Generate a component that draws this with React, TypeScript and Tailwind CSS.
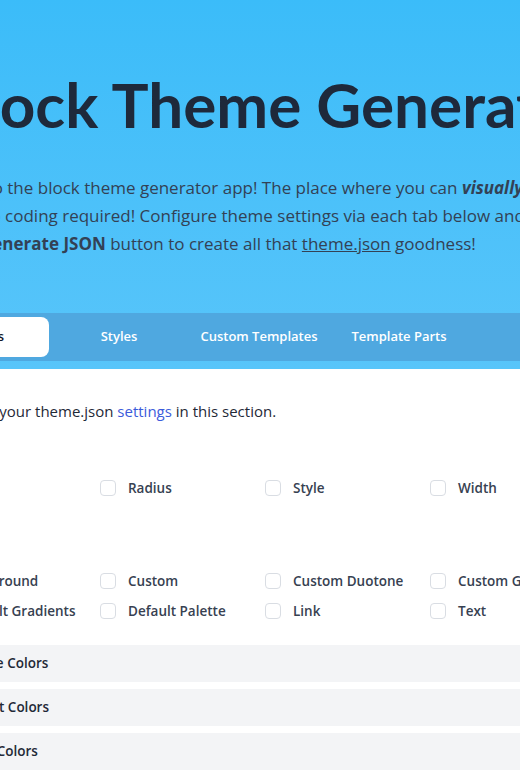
import React from "react";

const tabs = ["Settings", "Styles", "Custom Templates", "Template Parts"];

const borderOptions = ["Color", "Radius", "Style", "Width"];
const colorOptions = [
  "Background",
  "Custom",
  "Custom Duotone",
  "Custom Gradient",
  "Default Gradients",
  "Default Palette",
  "Link",
  "Text",
];
const panels = ["Duotone Colors", "Gradient Colors", "Palette Colors"];

const Check = ({ label }: { label: string }) => (
  <label className="flex items-center gap-3 h-[30px] text-[13.5px] font-semibold text-[#374151] whitespace-nowrap">
    <span className="w-4 h-4 rounded border border-[#d9dde3] bg-white shrink-0"></span>
    {label}
  </label>
);

const App = () => {
  return (
    <div className="w-[520px] h-[780px] overflow-hidden bg-white font-['Open_Sans',sans-serif]">
      <div className="w-[720px] -ml-[100px]">
        {/* Hero */}
        <div className="bg-gradient-to-b from-[#3bbcf9] to-[#58c5fa] pt-[73px] pb-2">
          <h1 className="ml-[44px] font-['Lato',sans-serif] text-[62px] leading-none font-bold text-[#1e293b] whitespace-nowrap">
            Block Theme Generator
          </h1>
          <p className="mt-[39px] ml-[9px] pl-[71px] -indent-[71px] text-[17px] leading-7 text-[#334155] whitespace-nowrap">
            Welcome to the block theme generator app! The place where you can{" "}
            <em className="font-bold">visually design</em>
            <br />
            no coding required! Configure theme settings via each tab below and click the
            <br />
            <strong className="font-bold">Generate JSON</strong> button to create all that{" "}
            <span className="underline">theme.json</span> goodness!
          </p>

          {/* Tabs */}
          <div className="mt-[55px] ml-[5px] flex p-1 bg-[#4fa8e0]">
            {tabs.map((t, i) => (
              <div
                key={t}
                className={
                  i === 0
                    ? "w-[140px] h-10 flex items-center justify-center rounded-lg bg-white text-[13px] font-semibold text-[#111827]"
                    : "w-[140px] h-10 flex items-center justify-center text-[13px] font-semibold text-white"
                }
              >
                {t}
              </div>
            ))}
          </div>
        </div>

        {/* Settings panel */}
        <div className="ml-[35px] pt-[30px]">
          <p className="-ml-[8px] text-[15px] leading-6 text-[#1f2937] whitespace-nowrap">
            Configure your theme.json <span className="text-[#3b5bdb]">settings</span> in this section.
          </p>

          <h2 className="mt-4 text-base leading-6 font-semibold text-[#1f2937]">Border</h2>
          <div className="mt-[10px] -ml-[3px] grid grid-cols-[168px_165px_165px_165px]">
            {borderOptions.map((o) => (
              <Check key={o} label={o} />
            ))}
          </div>

          <h2 className="mt-[24px] text-base leading-6 font-semibold text-[#1f2937]">Color</h2>
          <div className="mt-[15px] -ml-[3px] grid grid-cols-[168px_165px_165px_165px]">
            {colorOptions.map((o) => (
              <Check key={o} label={o} />
            ))}
          </div>

          <div className="mt-[19px] flex flex-col gap-[7px]">
            {panels.map((p) => (
              <div
                key={p}
                className="h-[37px] flex items-center pl-[12px] rounded bg-[#f3f4f6] text-[13.5px] font-semibold text-[#1f2937]"
              >
                {p}
              </div>
            ))}
          </div>
        </div>
      </div>
    </div>
  );
};

export default App;
